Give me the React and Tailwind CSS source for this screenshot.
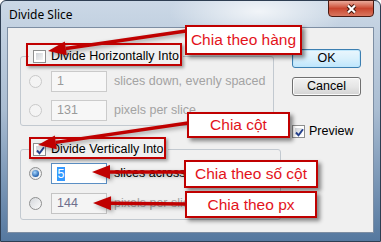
import React from "react";

const Check = ({ checked }) => (
  <span className="relative w-[13px] h-[13px] border border-[#8e8f8f] bg-white p-[2px] flex shrink-0">
    <span className="flex-1 bg-linear-to-br from-[#cfd3d8] to-[#f6f6f6]" />
    {checked && (
      <svg className="absolute left-[1px] top-[1px]" width="11" height="11" viewBox="0 0 11 11">
        <path d="M2 5.5 L4.5 8.2 L9 2.2" fill="none" stroke="#24408c" strokeWidth="1.9" />
      </svg>
    )}
  </span>
);

const Radio = ({ on, dim }) => (
  <span
    className={
      dim
        ? "w-[13px] h-[13px] rounded-full border border-[#c9c9c9] bg-[#f4f4f4] shrink-0"
        : "w-[13px] h-[13px] rounded-full border border-[#8e8f8f] bg-linear-to-br from-[#d4d7db] to-[#fbfbfb] flex items-center justify-center shrink-0"
    }
  >
    {on && <span className="w-[7px] h-[7px] rounded-full bg-[radial-gradient(circle_at_40%_35%,#a8d8ff,#1b5aa8_75%)]" />}
  </span>
);

const Row = ({ radio, field, label, labelClass }) => (
  <div className="flex items-center h-[21px]">
    {radio}
    <div className="ml-[9px]">{field}</div>
    <span className={`ml-[7px] whitespace-nowrap ${labelClass}`}>{label}</span>
  </div>
);

const Note = ({ className, children }) => (
  <div
    className={`absolute flex items-center justify-center bg-white border-2 border-[#c00000] text-[#e3131b] text-[15.5px] leading-none font-['Liberation_Sans',Arial,sans-serif] shadow-[3px_3px_4px_rgba(0,0,0,0.45)] ${className}`}
  >
    {children}
  </div>
);

const arrow = (x1, y1, x2, y2, key) => {
  const dx = x2 - x1;
  const dy = y2 - y1;
  const len = Math.hypot(dx, dy);
  const ux = dx / len;
  const uy = dy / len;
  const bx = x2 - ux * 18;
  const by = y2 - uy * 18;
  const pts = `${x2},${y2} ${bx - uy * 7},${by + ux * 7} ${bx + uy * 7},${by - ux * 7}`;
  return (
    <g key={key}>
      <line x1={x1} y1={y1} x2={bx} y2={by} stroke="#c00000" strokeWidth="3.5" />
      <polygon points={pts} fill="#c00000" />
    </g>
  );
};

export default function App() {
  return (
    <div className="relative w-[381px] h-[242px] overflow-hidden bg-white font-['Liberation_Sans',Arial,sans-serif] text-[12.5px] text-black">
      {/* window frame */}
      <div className="w-full h-full flex flex-col rounded-t-[6px] border border-[#2e3e52] bg-linear-to-b from-[#cbd8e6] via-[#aabdd2] via-45% to-[#55789f]">
        <div className="h-[26px] flex items-start justify-between bg-[radial-gradient(ellipse_90px_30px_at_68%_40%,rgba(255,255,255,0.75),transparent)]">
          <span className="ml-[8px] mt-[6px] text-[12px] leading-[16px] font-['Noto_Sans',sans-serif]">Divide Slice</span>
          <div className="w-[46px] h-[17px] mr-[6px] -mt-[1px] rounded-b-[4px] border border-[#4a1a12] bg-linear-to-b from-[#e9a99a] via-[#c9452e] via-50% to-[#d9765f] flex items-center justify-center">
            <svg width="13" height="10" viewBox="0 0 13 10">
              <path d="M3 1.5 L10 8.5 M10 1.5 L3 8.5" stroke="#3d1208" strokeWidth="4" />
              <path d="M3 1.5 L10 8.5 M10 1.5 L3 8.5" stroke="#ffffff" strokeWidth="2.2" />
            </svg>
          </div>
        </div>

        {/* client area */}
        <div className="flex-1 mx-[6px] mb-[8px] border border-[#7d8ea3] bg-[#f0f0f0] flex items-start">
          <div className="ml-[12px] mt-[22px] w-[253px] flex flex-col">
            <fieldset className="border border-[#c2c9d0] rounded-[3px] px-[8px] pt-[8px] pb-[4px] flex flex-col gap-[8px]">
              <legend className="px-[4px] flex items-center gap-[5px] leading-[13px]">
                <Check />
                <span>Divide Horizontally Into</span>
              </legend>
              <Row
                radio={<Radio dim />}
                field={<div className="w-[56px] h-[21px] border border-[#cbcbcb] bg-[#f7f7f7] pl-[5px] flex items-center text-[#9a9a9a]">1</div>}
                label="slices down, evenly spaced"
                labelClass="text-[#a3a3a3]"
              />
              <Row
                radio={<Radio dim />}
                field={<div className="w-[56px] h-[21px] border border-[#cbcbcb] bg-[#f7f7f7] pl-[5px] flex items-center text-[#9a9a9a]">131</div>}
                label="pixels per slice"
                labelClass="text-[#a3a3a3]"
              />
            </fieldset>

            <fieldset className="mt-[17px] border border-[#c2c9d0] rounded-[3px] px-[8px] pt-[7px] pb-[5px] flex flex-col gap-[9px]">
              <legend className="px-[4px] flex items-center gap-[5px] leading-[13px]">
                <Check checked />
                <span>Divide Vertically Into</span>
              </legend>
              <Row
                radio={<Radio on />}
                field={
                  <div className="w-[56px] h-[21px] border border-[#5b8fc4] bg-white pl-[5px] flex items-center">
                    <span className="bg-[#3399ff] text-white px-[0.5px] leading-[14px]">5</span>
                  </div>
                }
                label="slices across, evenly spaced"
                labelClass="text-black"
              />
              <Row
                radio={<Radio />}
                field={<div className="w-[56px] h-[21px] border border-[#c4c4c4] bg-[#f4f4f4] pl-[5px] flex items-center text-[#6e6e8c]">144</div>}
                label="pixels per slice"
                labelClass="text-[#a3a3a3]"
              />
            </fieldset>
          </div>

          <div className="ml-[19px] mt-[21px] flex flex-col">
            <button className="w-[69px] h-[19px] rounded-[3px] border border-[#3c7fb1] bg-linear-to-b from-[#eaf6fd] via-[#d9f0fc] via-50% to-[#bee6fd] shadow-[inset_0_0_0_1px_#bfe6fb] flex items-center justify-center leading-none">
              OK
            </button>
            <button className="mt-[9px] w-[69px] h-[19px] rounded-[3px] border border-[#707070] bg-linear-to-b from-[#f2f2f2] via-[#e6e6e6] via-50% to-[#d3d3d3] shadow-[inset_0_0_0_1px_#fbfbfb] flex items-center justify-center leading-none">
              Cancel
            </button>
            <div className="mt-[29px] flex items-center gap-[4px] leading-[13px]">
              <Check checked />
              <span>Preview</span>
            </div>
          </div>
        </div>
      </div>

      {/* annotations */}
      <svg className="absolute left-0 top-0 drop-shadow-[2px_2px_2px_rgba(0,0,0,0.35)]" width="381" height="242">
        {arrow(186, 31, 48, 51, "a")}
        {arrow(188, 123, 38, 145, "b")}
        {arrow(185, 172, 92, 172, "c")}
        {arrow(186, 204, 93, 203, "d")}
      </svg>

      <div className="absolute left-[26px] top-[43px] w-[156px] h-[23px] border-2 border-[#c00000] shadow-[2px_2px_3px_rgba(0,0,0,0.35)]" />
      <div className="absolute left-[29px] top-[137px] w-[137px] h-[22px] border-2 border-[#c00000] shadow-[2px_2px_3px_rgba(0,0,0,0.35)]" />

      <Note className="left-[185px] top-[25px] w-[117px] h-[30px]">Chia theo hàng</Note>
      <Note className="left-[187px] top-[112px] w-[103px] h-[26px]">Chia cột</Note>
      <Note className="left-[184px] top-[160px] w-[134px] h-[28px]">Chia theo số cột</Note>
      <Note className="left-[185px] top-[191px] w-[132px] h-[27px]">Chia theo px</Note>
    </div>
  );
}
